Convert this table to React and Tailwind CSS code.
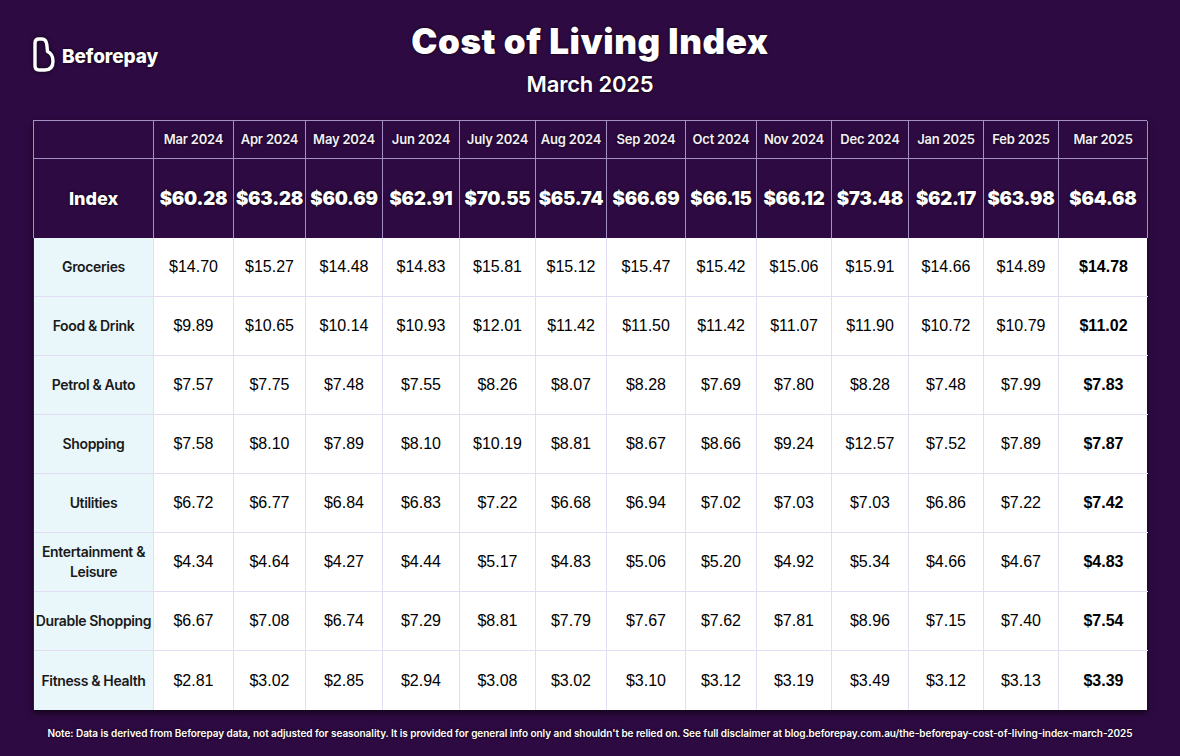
import React from "react";

const months = ["Mar 2024","Apr 2024","May 2024","Jun 2024","July 2024","Aug 2024","Sep 2024","Oct 2024","Nov 2024","Dec 2024","Jan 2025","Feb 2025","Mar 2025"];
const index = ["$60.28","$63.28","$60.69","$62.91","$70.55","$65.74","$66.69","$66.15","$66.12","$73.48","$62.17","$63.98","$64.68"];
const rows = [
  ["Groceries", ["$14.70","$15.27","$14.48","$14.83","$15.81","$15.12","$15.47","$15.42","$15.06","$15.91","$14.66","$14.89","$14.78"]],
  ["Food & Drink", ["$9.89","$10.65","$10.14","$10.93","$12.01","$11.42","$11.50","$11.42","$11.07","$11.90","$10.72","$10.79","$11.02"]],
  ["Petrol & Auto", ["$7.57","$7.75","$7.48","$7.55","$8.26","$8.07","$8.28","$7.69","$7.80","$8.28","$7.48","$7.99","$7.83"]],
  ["Shopping", ["$7.58","$8.10","$7.89","$8.10","$10.19","$8.81","$8.67","$8.66","$9.24","$12.57","$7.52","$7.89","$7.87"]],
  ["Utilities", ["$6.72","$6.77","$6.84","$6.83","$7.22","$6.68","$6.94","$7.02","$7.03","$7.03","$6.86","$7.22","$7.42"]],
  ["Entertainment & Leisure", ["$4.34","$4.64","$4.27","$4.44","$5.17","$4.83","$5.06","$5.20","$4.92","$5.34","$4.66","$4.67","$4.83"]],
  ["Durable Shopping", ["$6.67","$7.08","$6.74","$7.29","$8.81","$7.79","$7.67","$7.62","$7.81","$8.96","$7.15","$7.40","$7.54"]],
  ["Fitness & Health", ["$2.81","$3.02","$2.85","$2.94","$3.08","$3.02","$3.10","$3.12","$3.19","$3.49","$3.12","$3.13","$3.39"]],
];

const cols = "grid grid-cols-[120px_80px_72px_77px_77px_76px_71px_79px_71px_75px_77px_75px_75px_89px]";
const inter = { fontFamily: "Inter, 'Noto Sans', sans-serif" };
const shadow = "[text-shadow:0_0_3px_rgba(0,0,0,0.9)]";

function Logo() {
  return (
    <svg width="23" height="35" viewBox="0 0 23 35" fill="none" className="drop-shadow-[0_0_2px_rgba(0,0,0,0.8)]">
      <path
        d="M3 6 Q3 2 7 2 H10 Q14 2 14.8 7.5 L15.5 14.5 Q21 17 21 24 Q21 33 13 33 H7 Q3 33 3 29 Z"
        stroke="white"
        strokeWidth="3.4"
        strokeLinejoin="round"
      />
    </svg>
  );
}

export default function App() {
  return (
    <div className="w-[1180px] h-[756px] bg-[#2e0a42] overflow-hidden" style={inter}>
      <div className="grid grid-cols-[1fr_auto_1fr] h-[120px]">
        <div className="flex items-start pl-[32px] pt-[37px] gap-[7px]">
          <Logo />
          <span className={`text-white text-[19px] font-extrabold mt-[6px] tracking-[-0.1px] ${shadow}`}>Beforepay</span>
        </div>
        <div className="flex flex-col items-center pt-[19px]">
          <div className={`text-white text-[35px] leading-[44px] font-black tracking-[0.6px] ${shadow}`}>Cost of Living Index</div>
          <div className={`text-white text-[22px] leading-[28px] font-semibold mt-[7px] tracking-[-0.2px] ${shadow}`}>March 2025</div>
        </div>
        <div />
      </div>

      <div className="ml-[33px] w-[1114px] shadow-[0_3px_6px_rgba(0,0,0,0.6)]">
        <div className={`${cols} border-l-[1.5px] border-t-[1.5px] border-[#a58fc5] bg-[#2e0a42]`}>
          <div className="h-[38px] border-r-[1.5px] border-b-[1.5px] border-[#a58fc5]" />
          {months.map((m) => (
            <div key={m} className={`h-[38px] flex items-center justify-center border-r-[1.5px] border-b-[1.5px] border-[#a58fc5] text-[#f3eef8] text-[13px] font-semibold tracking-[-0.2px] whitespace-nowrap ${shadow}`}>{m}</div>
          ))}
          <div className={`h-[79px] flex items-center justify-center border-r-[1.5px] border-[#a58fc5] text-white text-[18px] font-extrabold ${shadow}`}>Index</div>
          {index.map((v, i) => (
            <div key={i} className={`h-[79px] flex items-center justify-center border-r-[1.5px] border-[#a58fc5] text-white text-[18.5px] font-black tracking-[-0.2px] whitespace-nowrap ${shadow}`}>{v}</div>
          ))}
        </div>
        <div className={`${cols} bg-white border-l border-[#3a1450]`}>
          {rows.map(([label, vals], r) => (
            <React.Fragment key={label}>
              <div className={`h-[59px] flex items-center justify-center text-center bg-[#e9f7fa] border-r border-[#e3dcf3] ${r < 7 ? "border-b" : ""} text-[#1a1a1a] text-[14px] leading-[20px] font-semibold tracking-[-0.35px] whitespace-nowrap`}>
                {label === "Entertainment & Leisure" ? <span>Entertainment &amp;<br />Leisure</span> : label}
              </div>
              {vals.map((v, i) => (
                <div
                  key={i}
                  className={`h-[59px] flex items-center justify-center ${i < 12 ? "border-r" : ""} ${r < 7 ? "border-b" : ""} border-[#e3dcf3] text-[16px] text-black ${i === 12 ? "font-bold" : ""}`}
                  style={{ fontFamily: "'Liberation Sans', Arial, sans-serif" }}
                >
                  {v}
                </div>
              ))}
            </React.Fragment>
          ))}
        </div>
      </div>

      <div className={`text-center text-white text-[10px] font-semibold mt-[16px] tracking-[-0.05px] whitespace-nowrap ${shadow}`}>
        Note: Data is derived from Beforepay data, not adjusted for seasonality. It is provided for general info only and shouldn't be relied on. See full disclaimer at blog.beforepay.com.au/the-beforepay-cost-of-living-index-march-2025
      </div>
    </div>
  );
}
